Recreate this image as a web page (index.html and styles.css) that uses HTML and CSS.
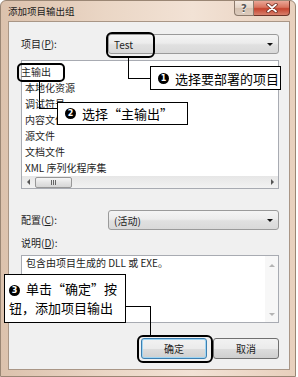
FILE: index.html
```html
<!DOCTYPE html>
<html lang="zh-CN">
<head>
<meta charset="utf-8">
<link rel="stylesheet" href="styles.css">
</head>
<body>
<div class="window">
  <div class="titlebar">
    <span class="title">添加项目输出组</span>
    <div class="caption">
      <div class="cbtn help">?</div>
      <div class="cbtn close">
        <svg width="12" height="10" viewBox="0 0 12 10"><path d="M2 1.5 L10 8.5 M10 1.5 L2 8.5" stroke="#6a2a1e" stroke-width="3.4" stroke-linecap="round"/><path d="M2 1.5 L10 8.5 M10 1.5 L2 8.5" stroke="#fff" stroke-width="1.8" stroke-linecap="round"/></svg>
      </div>
    </div>
  </div>
  <div class="client">
    <div class="row">
      <span class="label">项目(<u>P</u>):</span>
      <div class="combo"><span class="combo-text">Test</span><span class="arrow"></span></div>
    </div>
    <div class="listbox">
      <ul class="items">
        <li class="first">主输出</li>
        <li>本地化资源</li>
        <li>调试符号</li>
        <li>内容文件</li>
        <li>源文件</li>
        <li>文档文件</li>
        <li>XML 序列化程序集</li>
      </ul>
      <div class="hscroll">
        <span class="sarrow left"></span>
        <div class="track"><div class="thumb"><span class="grip"></span></div></div>
        <span class="sarrow right"></span>
      </div>
    </div>
    <div class="row config">
      <span class="label">配置(<u>C</u>):</span>
      <div class="combo"><span class="combo-text">(活动)</span><span class="arrow"></span></div>
    </div>
    <div class="label desc-label">说明(<u>D</u>):</div>
    <div class="descbox">
      <div class="desc-text">包含由项目生成的 DLL 或 EXE。</div>
      <div class="vscroll"><span class="varrow up"></span><span class="varrow down"></span></div>
    </div>
    <div class="buttons">
      <div class="btn default">确定</div>
      <div class="btn">取消</div>
    </div>
  </div>
</div>

<div class="hl hl-test"></div>
<div class="hl hl-main"></div>
<div class="hl hl-ok"></div>

<div class="ln ln1v"></div>
<div class="ln ln1h"></div>
<div class="ln ln2v"></div>
<div class="ln ln2h"></div>
<div class="ln ln3h"></div>
<div class="ln ln3v"></div>

<div class="callout co1"><span class="num">1</span>选择要部署的项目</div>
<div class="callout co2"><span class="num">2</span>选择“主输出”</div>
<div class="callout co3"><span class="num">3</span>单击“确定”按<br>钮，添加项目输出</div>
</body>
</html>
```
FILE: styles.css
```css
* { box-sizing: border-box; }
html, body { margin: 0; padding: 0; }
body {
  width: 298px;
  height: 377px;
  background: #fff;
  position: relative;
  overflow: hidden;
  font-family: "Noto Sans CJK SC", "Noto Sans", sans-serif;
}
.window {
  width: 296px;
  height: 377px;
  display: flex;
  flex-direction: column;
  background: linear-gradient(90deg, #dcc2ad 0%, #ead6c5 35%, #f2e2d5 65%, #e8d0bd 100%);
  border: 1px solid #9a8674;
  border-radius: 6px 6px 0 0;
}
.titlebar {
  height: 20px;
  flex: none;
  display: flex;
  align-items: flex-start;
  padding-left: 7px;
}
.title {
  flex: 1;
  font-size: 9.5px;
  line-height: 20px;
  color: #1b1b1b;
}
.caption {
  display: flex;
  margin-right: 5px;
}
.cbtn {
  height: 15px;
  display: flex;
  align-items: center;
  justify-content: center;
}
.help {
  width: 20px;
  border: 1px solid #8c7a6c;
  border-top: none;
  border-radius: 0 0 0 4px;
  background: linear-gradient(#f4e9e0, #e2d2c4 50%, #d5c1b0 51%, #dccbbd);
  color: #555;
  font: bold 10px "DejaVu Sans", sans-serif;
  text-shadow: 0 1px 0 #fff;
}
.close {
  width: 36px;
  border: 1px solid #6e3428;
  border-top: none;
  border-left: none;
  border-radius: 0 0 4px 0;
  background: linear-gradient(#eaa696, #d8735e 45%, #c5432e 55%, #d8806c);
}
.client {
  flex: 1;
  margin: 0 5px 6px 7px;
  background: #f0f0f0;
  border: 1px solid #a99686;
  padding: 12px 10px 0 12px;
  display: flex;
  flex-direction: column;
  font-size: 10px;
  color: #1e1e1e;
}
.row {
  display: flex;
  align-items: center;
  height: 20px;
  flex: none;
}
.label {
  width: 87px;
  flex: none;
  line-height: 14px;
}
.label u { text-decoration-thickness: 1px; text-underline-offset: 1px; }
.combo {
  flex: 1;
  height: 20px;
  display: flex;
  align-items: center;
  justify-content: space-between;
  padding: 0 5px 0 5px;
  border: 1px solid #9a9a9a;
  border-radius: 3px;
  background: linear-gradient(#f4f4f4, #ececec 45%, #e0e0e0 55%, #d9d9d9);
}
.arrow {
  width: 0;
  height: 0;
  border-left: 3px solid transparent;
  border-right: 3px solid transparent;
  border-top: 3px solid #111;
}
.listbox {
  margin-top: 6px;
  height: 129px;
  flex: none;
  border: 1px solid #a8abb2;
  background: #fff;
  display: flex;
  flex-direction: column;
}
.items {
  list-style: none;
  margin: 0;
  padding: 3px 0 0 3px;
  flex: 1;
}
.items li {
  line-height: 16px;
  height: 16px;
  white-space: nowrap;
}
.items li.first { margin-left: -4px; }
.hscroll {
  height: 12px;
  flex: none;
  display: flex;
  align-items: center;
  background: linear-gradient(#e6e6e6, #f2f2f2);
}
.sarrow {
  width: 12px;
  height: 12px;
  display: flex;
  align-items: center;
  justify-content: center;
}
.sarrow::after {
  content: "";
  border-top: 3px solid transparent;
  border-bottom: 3px solid transparent;
}
.sarrow.left::after { border-right: 3px solid #555; }
.sarrow.right::after { border-left: 3px solid #555; }
.track { flex: 1; height: 12px; display: flex; align-items: center; }
.thumb {
  margin-left: 1px;
  width: 37px;
  height: 11px;
  border: 1px solid #979797;
  border-radius: 2px;
  background: linear-gradient(#f6f6f6, #e4e4e4 50%, #d6d6d6);
  display: flex;
  align-items: center;
  justify-content: center;
}
.grip {
  width: 5px;
  height: 5px;
  background: repeating-linear-gradient(90deg, #666 0 1px, transparent 1px 2px);
}
.config { margin-top: 21px; }
.desc-label { margin-top: 6px; width: auto; }
.descbox {
  margin-top: 5px;
  height: 68px;
  flex: none;
  border: 1px solid #a8abb2;
  background: #fff;
  display: flex;
}
.desc-text {
  flex: 1;
  padding: 0 4px;
  line-height: 14px;
  white-space: nowrap;
}
.vscroll {
  width: 13px;
  display: flex;
  flex-direction: column;
  justify-content: space-between;
  align-items: center;
  padding: 8px 0 6px;
  background: #f7f7f7;
}
.varrow {
  width: 0;
  height: 0;
  border-left: 3px solid transparent;
  border-right: 3px solid transparent;
}
.varrow.up { border-bottom: 3px solid #b4b4b4; }
.varrow.down { border-top: 3px solid #b4b4b4; }
.buttons {
  margin-top: 15px;
  display: flex;
  justify-content: flex-end;
  gap: 6px;
}
.btn {
  width: 66px;
  height: 21px;
  display: flex;
  align-items: center;
  justify-content: center;
  border: 1px solid #707070;
  border-radius: 3px;
  background: linear-gradient(#f2f2f2, #ebebeb 50%, #dddddd 51%, #cfcfcf);
  font-size: 10px;
}
.btn.default {
  border-color: #3c7fb1;
  box-shadow: inset 0 0 0 1px #9fd5f3;
}

/* annotations */
.hl {
  position: absolute;
  border: 2px solid #000;
  border-radius: 6px;
}
.hl-test { left: 106px; top: 32px; width: 49px; height: 26px; }
.hl-main { left: 17px; top: 63px; width: 48px; height: 19px; border-radius: 5px; }
.hl-ok { left: 137px; top: 335px; width: 76px; height: 28px; }
.ln { position: absolute; background: #000; }
.ln1v { left: 128px; top: 58px; width: 1px; height: 21px; }
.ln1h { left: 128px; top: 78px; width: 22px; height: 1px; }
.ln2v { left: 39px; top: 82px; width: 1px; height: 27px; }
.ln2h { left: 39px; top: 108px; width: 18px; height: 1px; }
.ln3h { left: 126px; top: 306px; width: 25px; height: 1px; }
.ln3v { left: 150px; top: 306px; width: 1px; height: 29px; }
.callout {
  position: absolute;
  background: #fff;
  border: 1px solid #000;
  font-size: 13px;
  color: #000;
  display: flex;
  align-items: center;
  padding-left: 7px;
  white-space: nowrap;
}
.co1 { left: 150px; top: 66px; width: 131px; height: 24px; }
.co2 { left: 57px; top: 102px; width: 131px; height: 23px; }
.co3 { left: 4px; top: 274px; width: 122px; height: 49px; display: block; line-height: 19px; padding-top: 4px; padding-left: 4px; }
.num {
  display: inline-flex;
  width: 11px;
  height: 11px;
  border-radius: 50%;
  background: #000;
  color: #fff;
  font: bold 8px/11px "DejaVu Sans", sans-serif;
  align-items: center;
  justify-content: center;
  margin-right: 6px;
  vertical-align: 1px;
}
```
